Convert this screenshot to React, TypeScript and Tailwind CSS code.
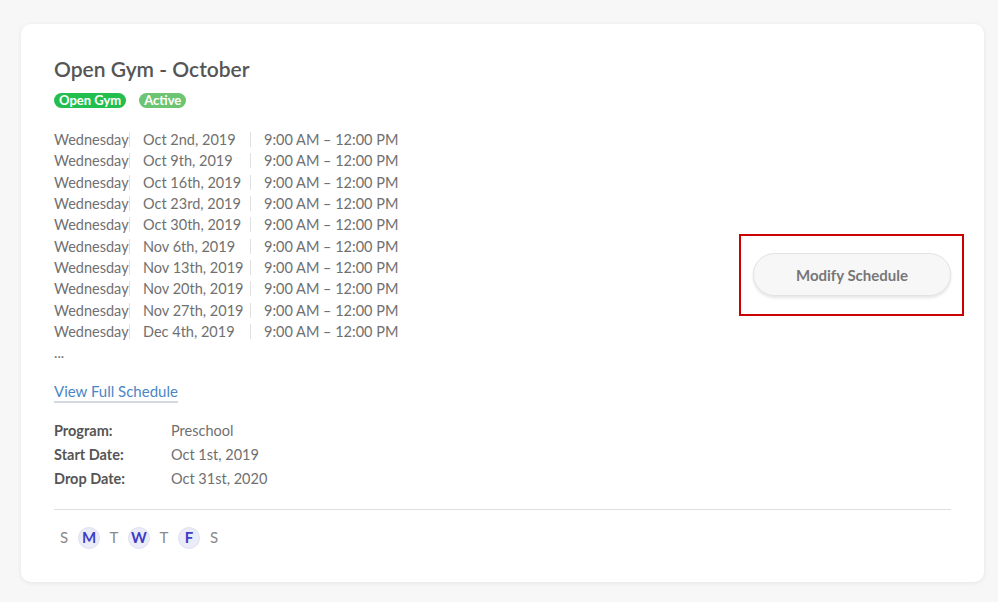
const sessions = [
  "Oct 2nd, 2019",
  "Oct 9th, 2019",
  "Oct 16th, 2019",
  "Oct 23rd, 2019",
  "Oct 30th, 2019",
  "Nov 6th, 2019",
  "Nov 13th, 2019",
  "Nov 20th, 2019",
  "Nov 27th, 2019",
  "Dec 4th, 2019",
];

const details = [
  { label: "Program:", value: "Preschool" },
  { label: "Start Date:", value: "Oct 1st, 2019" },
  { label: "Drop Date:", value: "Oct 31st, 2020" },
];

const days = [
  { d: "S", on: false },
  { d: "M", on: true },
  { d: "T", on: false },
  { d: "W", on: true },
  { d: "T", on: false },
  { d: "F", on: true },
  { d: "S", on: false },
];

export default function App() {
  return (
    <div
      className="min-h-screen bg-[#f7f7f7] pt-[24px] pl-[21px]"
      style={{ fontFamily: "Lato, 'Open Sans', sans-serif" }}
    >
      <div className="w-[963px] h-[558px] bg-white rounded-[10px] shadow-[0_1px_5px_rgba(0,0,0,0.08)] px-[33px] pt-[31px]">
        <div className="flex">
          {/* Left: title, schedule, details */}
          <div className="flex-1">
            <h1 className="text-[21px] leading-[28px] font-semibold text-[#555]">
              Open Gym - October
            </h1>
            <div className="mt-[10px] flex gap-[13px]">
              <span className="h-[15px] px-[5px] rounded-full bg-[#22bf4e] text-white text-[13px] leading-[15px] font-bold">
                Open Gym
              </span>
              <span className="h-[15px] px-[5px] rounded-full bg-[#6cc572] text-white text-[13px] leading-[15px] font-bold">
                Active
              </span>
            </div>

            <div className="mt-[21px] text-[14.5px] leading-[21.33px] text-[#707070]">
              {sessions.map((date) => (
                <div key={date} className="flex items-center">
                  <span className="w-[75px] whitespace-nowrap">Wednesday</span>
                  <span className="w-px h-[15px] bg-[#e0e0e0]"></span>
                  <span className="w-[120px] pl-[13px] whitespace-nowrap">{date}</span>
                  <span className="w-px h-[15px] bg-[#e0e0e0]"></span>
                  <span className="pl-[13px] whitespace-nowrap">9:00 AM – 12:00 PM</span>
                </div>
              ))}
              <div>...</div>
            </div>

            <a
              href="#"
              className="mt-[17px] inline-block text-[15px] leading-[20px] text-[#4a86c5] border-b-2 border-[#d3d9e0]"
            >
              View Full Schedule
            </a>

            <div className="mt-[16px] text-[14.5px] leading-[24px]">
              {details.map((row) => (
                <div key={row.label} className="flex">
                  <span className="w-[117px] font-bold text-[#555]">{row.label}</span>
                  <span className="text-[#707070]">{row.value}</span>
                </div>
              ))}
            </div>
          </div>

          {/* Right: action */}
          <div className="flex items-center justify-end pt-[4px]">
            <div className="relative">
              <button className="w-[198px] h-[43px] rounded-full bg-[#f7f7f7] border border-[#e3e3e3] shadow-[0_2px_3px_rgba(0,0,0,0.1)] text-[15px] font-bold text-[#777]">
                Modify Schedule
              </button>
              <div className="absolute -left-[14px] -top-[19px] -right-[13px] -bottom-[20px] border-2 border-[#cc0000] pointer-events-none"></div>
            </div>
          </div>
        </div>

        <div className="mt-[18px] border-t border-[#dedede]"></div>

        <div className="mt-[17px] flex gap-[3px] -ml-[1px]">
          {days.map((day, i) => (
            <span
              key={i}
              className={
                day.on
                  ? "w-[22px] h-[22px] rounded-full bg-[#ebecf8] border border-[#dfe1f1] flex items-center justify-center text-[15px] font-bold text-[#3c3fc4]"
                  : "w-[22px] h-[22px] flex items-center justify-center text-[15px] text-[#888]"
              }
            >
              {day.d}
            </span>
          ))}
        </div>
      </div>
    </div>
  );
}
